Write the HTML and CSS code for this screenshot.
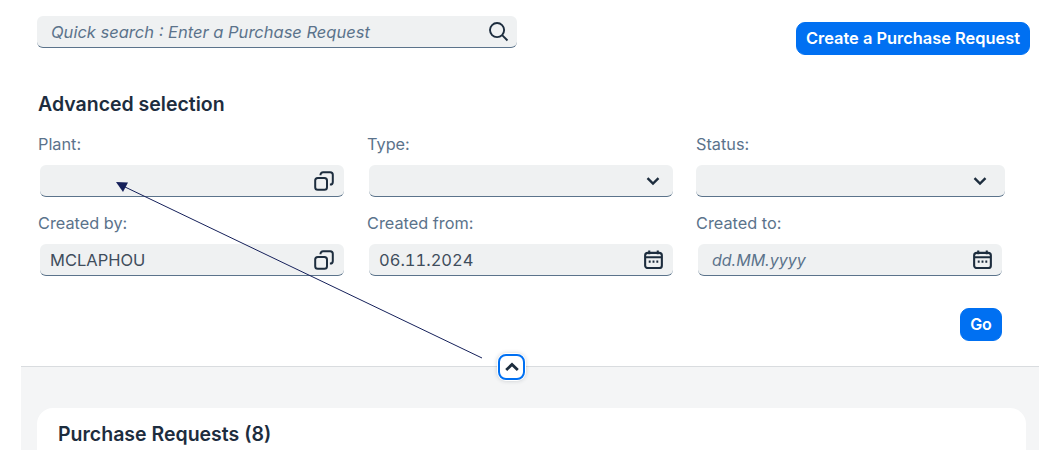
FILE: index.html
```html
<!DOCTYPE html>
<html lang="en">
<head>
  <meta charset="UTF-8" />
  <meta name="viewport" content="width=device-width, initial-scale=1.0" />
  <title>Purchase Requests</title>
  <link rel="stylesheet" href="styles.css">
</head>
<body>
  <div class="page">
    <div class="filters">
      <div class="topbar">
        <div class="search">
          <span class="placeholder placeholder-search">Quick search : Enter a Purchase Request</span>
          <svg class="icon icon-search" viewBox="0 0 22 22"><circle cx="9.5" cy="9.5" r="7.4"/><path d="M14.8 14.8l5.6 5.6"/></svg>
        </div>
        <button class="btn btn-create">Create a Purchase Request</button>
      </div>

      <h2 class="section-title">Advanced selection</h2>

      <div class="grid">
        <div class="cell">
          <label>Plant:</label>
          <div class="field">
            <span></span>
            <svg class="icon" viewBox="0 0 20 20"><rect x="1.2" y="7" width="11.8" height="11.8" rx="2.6"/><path d="M6.5 4.2V3.8a2.6 2.6 0 0 1 2.6-2.6h7.1a2.6 2.6 0 0 1 2.6 2.6v7.1a2.6 2.6 0 0 1-2.6 2.6h-.3"/></svg>
          </div>
        </div>
        <div class="cell">
          <label>Type:</label>
          <div class="field">
            <span></span>
            <svg class="icon icon-small" viewBox="0 0 14 10"><path d="M1.5 2.2L7 7.5l5.5-5.3"/></svg>
          </div>
        </div>
        <div class="cell">
          <label>Status:</label>
          <div class="field field-wide">
            <span></span>
            <svg class="icon icon-small" viewBox="0 0 14 10"><path d="M1.5 2.2L7 7.5l5.5-5.3"/></svg>
          </div>
        </div>
        <div class="cell">
          <label>Created by:</label>
          <div class="field">
            <span class="value">MCLAPHOU</span>
            <svg class="icon" viewBox="0 0 20 20"><rect x="1.2" y="7" width="11.8" height="11.8" rx="2.6"/><path d="M6.5 4.2V3.8a2.6 2.6 0 0 1 2.6-2.6h7.1a2.6 2.6 0 0 1 2.6 2.6v7.1a2.6 2.6 0 0 1-2.6 2.6h-.3"/></svg>
          </div>
        </div>
        <div class="cell">
          <label>Created from:</label>
          <div class="field">
            <span class="value">06.11.2024</span>
            <svg class="icon icon-date" viewBox="0 0 20 20"><rect x="1.2" y="3" width="17.6" height="16" rx="2.8"/><path d="M5.5 .6v4M14.5 .6v4M1.2 7.6h17.6M5 12.2h2M9 12.2h2M13 12.2h2"/></svg>
          </div>
        </div>
        <div class="cell">
          <label>Created to:</label>
          <div class="field field-narrow">
            <span class="placeholder">dd.MM.yyyy</span>
            <svg class="icon icon-date" viewBox="0 0 20 20"><rect x="1.2" y="3" width="17.6" height="16" rx="2.8"/><path d="M5.5 .6v4M14.5 .6v4M1.2 7.6h17.6M5 12.2h2M9 12.2h2M13 12.2h2"/></svg>
          </div>
        </div>
      </div>

      <div class="actions">
        <button class="btn btn-go">Go</button>
      </div>
    </div>

    <div class="results">
      <button class="collapse">
        <svg viewBox="0 0 14 10"><path d="M1.2 8L7 2.4 12.800 8"/></svg>
      </button>
      <div class="card">
        <h2 class="card-title">Purchase Requests (8)</h2>
      </div>
    </div>
  </div>

  <!-- annotation drawn on top of the screenshot -->
  <svg class="annotation" viewBox="0 0 1058 463">
    <line x1="482" y1="358" x2="124" y2="186.500"/>
    <polygon points="116,182 128,182.500 123,192"/>
  </svg>
</body>
</html>
```

FILE: styles.css
```css
* {
  box-sizing: border-box;
}
body {
  margin: 0;
  height: 463px;
  overflow: hidden;
  background: white;
  font-family: Inter, "Open Sans", sans-serif;
  color: #1d2d3e;
  position: relative;
}
.page {
  width: 1018px;
  margin-left: 21px;
}
.filters {
  height: 366px;
  padding: 16px 9px 0 16px;
}
.topbar {
  display: flex;
  justify-content: space-between;
  align-items: flex-start;
}
.search {
  width: 480px;
  height: 32px;
  display: flex;
  align-items: center;
  justify-content: space-between;
  padding: 0 8px 0 14px;
  background: #eff1f2;
  border-radius: 6px;
  border-bottom: 1px solid #5b738b;
}
.placeholder {
  font-style: italic;
  font-size: 16px;
  color: #5b738b;
}
.placeholder-search {
  font-size: 16.5px;
}
.btn {
  border: 1px solid #0070f2;
  background: #0070f2;
  color: white;
  font-family: inherit;
  font-weight: 600;
  font-size: 16px;
  border-radius: 9px;
  cursor: pointer;
}
.btn-create {
  width: 234px;
  height: 33px;
  margin-top: 6px;
  padding: 0 0 2px;
  font-size: 16.4px;
}
.section-title {
  margin: 0;
  padding: 37px 0 0 1px;
  font-size: 19.5px;
  line-height: 24px;
  font-weight: 600;
}
.grid {
  display: grid;
  grid-template-columns: 329px 329px 1fr;
  row-gap: 16px;
  margin-top: 18px;
}
.cell label {
  display: block;
  padding-left: 1px;
  font-size: 16.3px;
  line-height: 20px;
  color: #5b738b;
  margin-bottom: 11px;
}
.field {
  width: 304px;
  height: 32px;
  margin-left: 3px;
  display: flex;
  align-items: center;
  justify-content: space-between;
  padding: 0 10px;
  background: #eff1f2;
  border-radius: 6px;
  border-bottom: 1px solid #5b738b;
}
.field-wide {
  width: 309px;
  margin-left: 1px;
  padding-right: 15px;
}
.field-narrow {
  margin-left: 3px;
  padding-left: 14px;
}
.value {
  font-size: 16.5px;
  color: #3f4d5c;
  font-variant-numeric: tabular-nums;
}
.icon {
  width: 20px;
  height: 20px;
  flex: none;
  fill: none;
  stroke: #1d2d3e;
  stroke-width: 2;
}
.icon-search {
  width: 21px;
  height: 21px;
}
.icon-date {
  width: 19px;
  height: 19px;
  stroke-width: 2.2;
}
.icon-small {
  width: 14px;
  height: 10px;
  margin-right: 3px;
  stroke-width: 2.4;
}
.actions {
  display: flex;
  justify-content: flex-end;
  margin-top: 32px;
  padding-right: 28px;
}
.btn-go {
  width: 42px;
  height: 33px;
  padding: 0 0 2px;
}
.results {
  position: relative;
  height: 84px;
  padding: 41px 13px 0 16px;
  background: #f4f5f6;
  border-top: 1px solid #d9dcdf;
}
.collapse {
  position: absolute;
  left: 477px;
  top: -13px;
  width: 27px;
  height: 26px;
  padding: 0;
  display: flex;
  align-items: center;
  justify-content: center;
  background: white;
  border: 2px solid #0070f2;
  border-radius: 8px;
  box-shadow: 0 0 0 1px white, 0 0 4px 1px rgba(29,45,62,0.2);
}
.collapse svg {
  width: 14px;
  height: 10px;
  fill: none;
  stroke: #1d2d3e;
  stroke-width: 2.8;
}
.card {
  height: 43px;
  padding: 14px 21px 0;
  background: white;
  border-radius: 16px 16px 0 0;
}
.card-title {
  margin: 0;
  font-size: 19.5px;
  line-height: 24px;
  font-weight: 600;
}
.annotation {
  position: absolute;
  left: 0;
  top: 0;
  width: 1058px;
  height: 463px;
  pointer-events: none;
}
.annotation line {
  stroke: #15205a;
  stroke-width: 1;
}
.annotation polygon {
  fill: #15205a;
}
```
